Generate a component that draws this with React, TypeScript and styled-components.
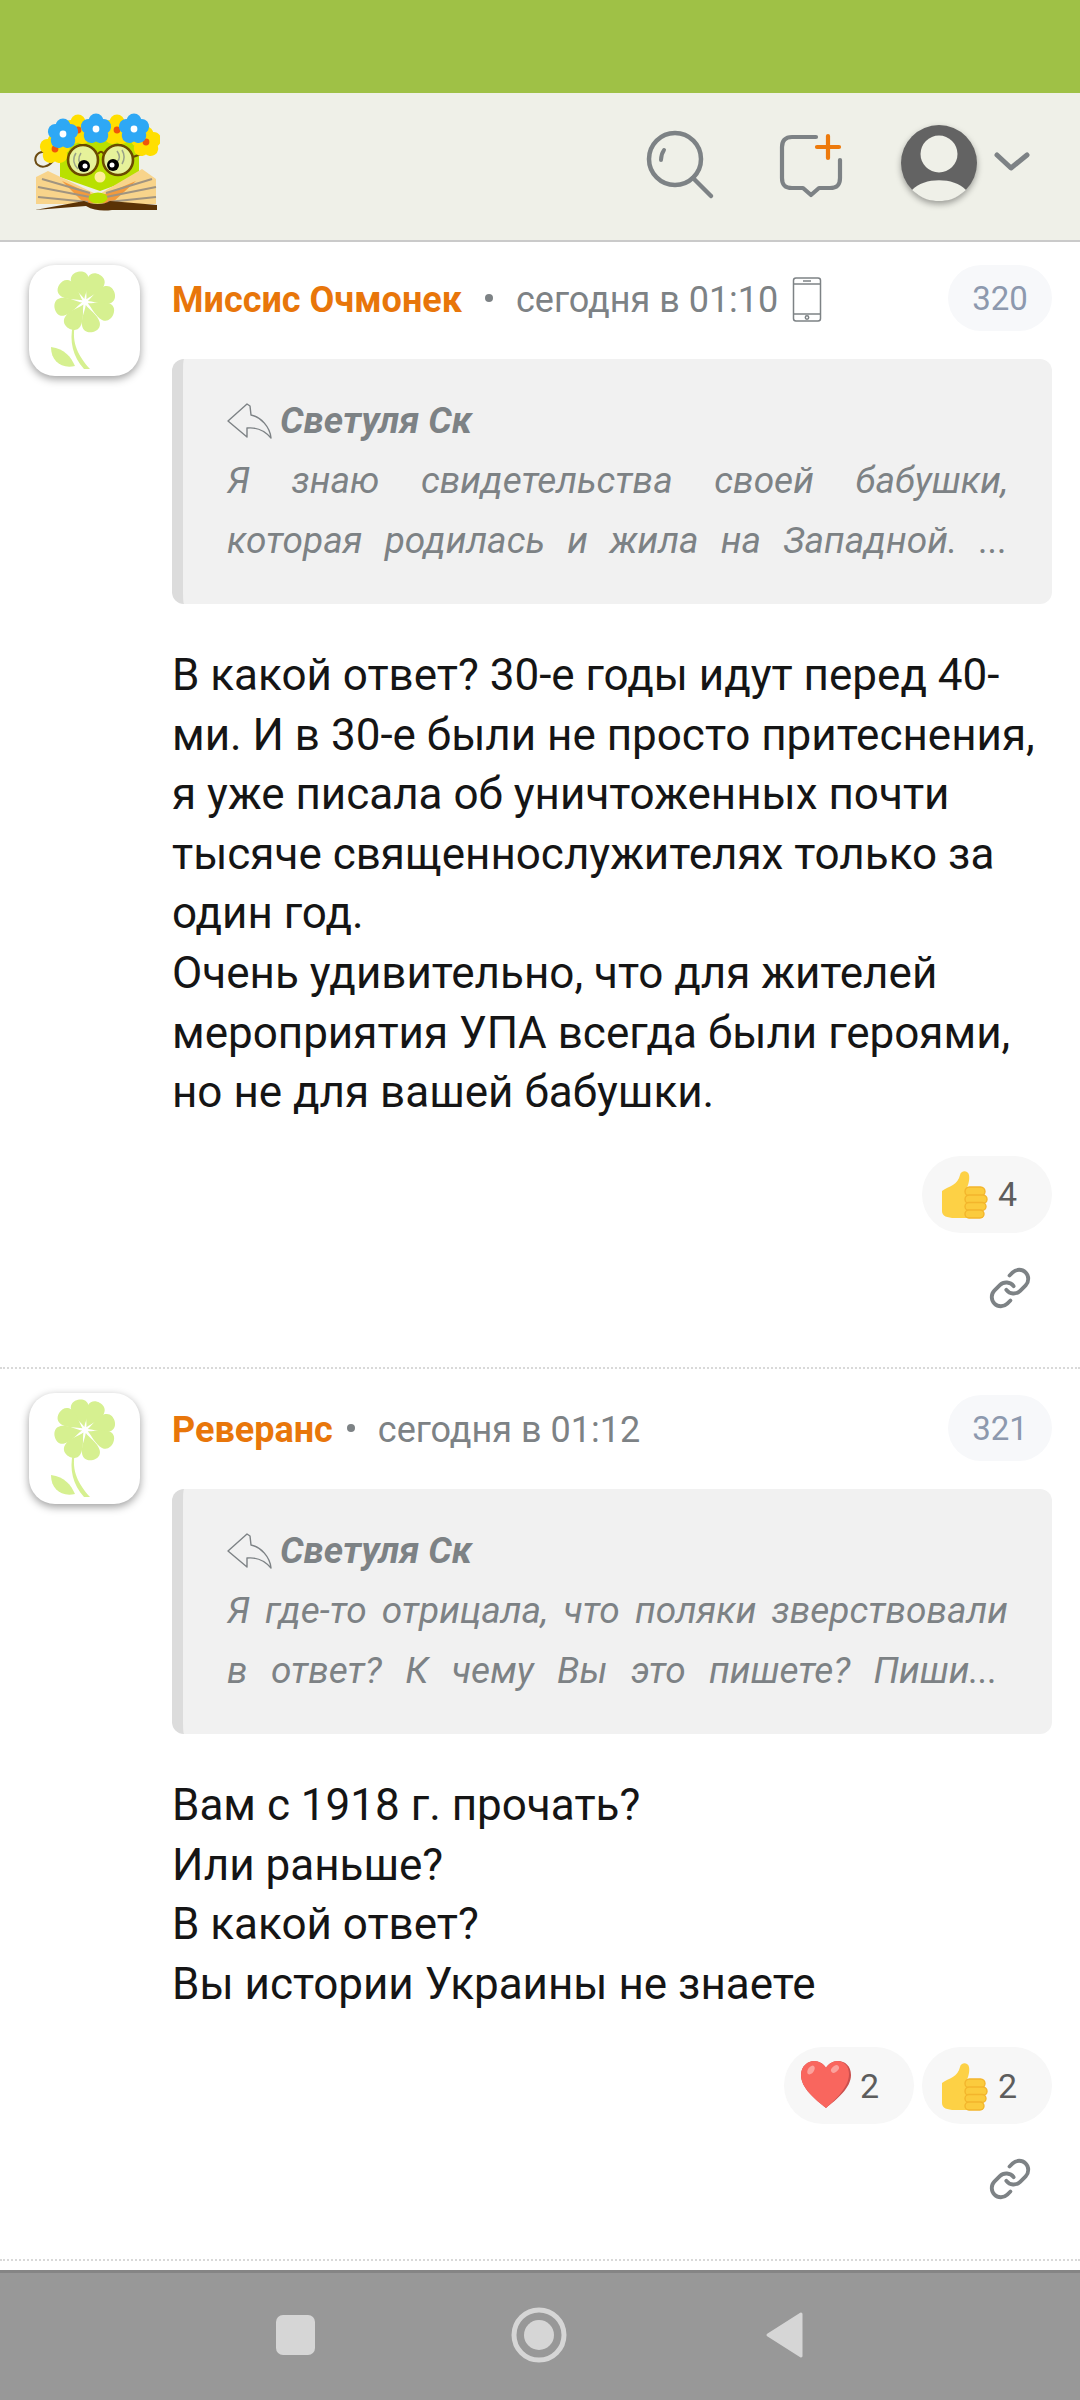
import React from 'react';
import styled, { createGlobalStyle } from 'styled-components';
import { Link as LinkIcon } from 'lucide-react';

const GlobalStyle = createGlobalStyle`
	html, body {
		margin: 0;
		padding: 0;
		background: #fff;
		font-family: Roboto, "Liberation Sans", sans-serif;
	}
	* {
		box-sizing: border-box;
	}
`;

const Screen = styled.div`
	width: 1080px;
	height: 2400px;
	display: flex;
	flex-direction: column;
	overflow: hidden;
	background: #fff;
`;

const StatusBar = styled.div`
	height: 93px;
	flex: none;
	background: #9fc146;
`;

const Header = styled.header`
	height: 149px;
	flex: none;
	display: flex;
	align-items: center;
	padding: 0 50px 0 34px;
	background: #eff0e8;
	border-bottom: 2px solid #cacaca;
`;

const Logo = styled.svg`
	width: 126px;
	height: 110px;
	margin-right: auto;
	flex: none;
`;

const SearchIcon = styled.svg`
	flex: none;
	margin-right: 53px;
`;

const ChatIcon = styled.svg`
	flex: none;
	margin-right: 50px;
`;

const UserIcon = styled.svg`
	flex: none;
	margin: 0 12px 8px 0;
	filter: drop-shadow(0 3px 3px rgba(0, 0, 0, 0.35));
`;

const ChevronIcon = styled.svg`
	flex: none;
	margin-bottom: 8px;
`;

const Feed = styled.main`
	flex: 1;
	min-height: 0;
	overflow: hidden;
`;

const Post = styled.article<{ $height: number; $top: number }>`
	display: grid;
	grid-template-columns: 111px 1fr;
	column-gap: 32px;
	height: ${(props) => props.$height}px;
	padding: ${(props) => props.$top}px 28px 0 29px;
	border-bottom: 2px dotted #d9d9d9;
`;

const Avatar = styled.div`
	width: 111px;
	height: 111px;
	border-radius: 26px;
	background: #fff;
	box-shadow: 0 3px 8px rgba(0, 0, 0, 0.38);
	overflow: hidden;
`;

const PostBody = styled.div<{ $offset: number }>`
	min-width: 0;
	display: flex;
	flex-direction: column;
	padding-top: ${(props) => props.$offset}px;
`;

const Meta = styled.div`
	height: 66px;
	display: flex;
	align-items: center;
	margin-bottom: 28px;
	white-space: nowrap;
`;

const Author = styled.span`
	font-size: 36px;
	font-weight: 700;
	color: #e8760a;
	padding-top: 4px;
`;

const Dot = styled.span<{ $gap: number }>`
	width: 8px;
	height: 8px;
	margin: 0 23px 0 ${(props) => props.$gap}px;
	border-radius: 50%;
	background: #7d8285;
`;

const Time = styled.span`
	font-size: 36px;
	color: #7d8285;
	padding-top: 4px;
`;

const PhoneIcon = styled.svg`
	width: 30px;
	height: 46px;
	margin: 4px 0 0 14px;
`;

const Number = styled.span`
	width: 104px;
	height: 66px;
	margin-left: auto;
	display: flex;
	align-items: center;
	justify-content: center;
	border-radius: 33px;
	background: #f7f8fa;
	color: #8d99ae;
	font-size: 33px;
`;

const Quote = styled.blockquote`
	height: 245px;
	margin: 0 0 42px;
	padding: 32px 44px;
	border-left: 11px solid #dcdcdc;
	border-radius: 12px;
	background: #f1f1f1;
	color: #7d8285;
	font-size: 37px;
	font-style: italic;
	line-height: 60px;
`;

const QuoteAuthor = styled.div`
	display: flex;
	align-items: center;
	gap: 8px;
	font-weight: 700;
`;

const ReplyIcon = styled.svg`
	width: 45px;
	height: 36px;
	flex: none;
`;

const QuoteLine = styled.div<{ $inset: number }>`
	padding-right: ${(props) => props.$inset}px;
	text-align: justify;
	text-align-last: justify;
`;

const Text = styled.div`
	font-size: 44px;
	line-height: 59.6px;
	color: #151515;
`;

const Reactions = styled.div`
	display: flex;
	justify-content: flex-end;
	gap: 8px;
	margin-top: 33px;
`;

const Reaction = styled.div`
	width: 130px;
	height: 77px;
	display: flex;
	align-items: center;
	gap: 9px;
	padding-left: 17px;
	border-radius: 39px;
	background: #f7f7f7;
	color: #5d5d5d;
	font-size: 34px;
`;

const EmojiIcon = styled.svg`
	width: 50px;
	height: 50px;
	flex: none;
`;

const LinkRow = styled.div`
	display: flex;
	justify-content: flex-end;
	margin-top: 33px;
	padding-right: 20px;
	color: #7d8285;
`;

const NavBar = styled.nav`
	height: 130px;
	flex: none;
	display: flex;
	align-items: center;
	padding: 0 0 4px 276px;
	background: #989898;
	border-top: 3px solid #858585;
`;

const NavSquare = styled.svg`
	flex: none;
	margin-right: 196px;
`;

const NavCircle = styled.svg`
	flex: none;
	margin-right: 198px;
`;

const NavBack = styled.svg`
	flex: none;
`;

const FlowerIcon = () => (
	<svg width="111" height="111" viewBox="0 0 111 111">
		{[-13, 28, 72, 115, 165, 212, 258, 305].map((angle) => (
			<path
				key={angle}
				d="M0 -3 C -2 -8 -9 -16 -9 -23 C -9 -29 -4 -31 0 -31 C 4 -31 9 -29 9 -23 C 9 -16 2 -8 0 -3"
				fill="#d6f090"
				transform={`translate(56 37) rotate(${angle})`}
			/>
		))}
		<path d="M46 60 C 42 78 50 92 61 104 L 55 104 C 44 92 40 76 44 60 Z" fill="#d6f090" />
		<path d="M22 82 C 36 84 42 92 46 101 C 32 104 22 96 22 82 Z" fill="#d6f090" />
	</svg>
);

const Flower = ({ x, y, color, center }: { x: number; y: number; color: string; center: string }) => (
	<g transform={`translate(${x} ${y})`}>
		{[0, 72, 144, 216, 288].map((a) => (
			<circle key={a} cx="0" cy="-8" r="7.5" fill={color} transform={`rotate(${a})`} />
		))}
		<circle r="3.4" fill={center} />
	</g>
);

const LogoArt = () => (
	<Logo viewBox="34 111 126 110">
		<path d="M50 153 C 36 146 32 160 38 164 C 42 167 48 166 53 160" fill="none" stroke="#6b4a10" strokeWidth="2" />
		<path d="M60 140 H139 V176 L100 190 L60 176 Z" fill="#b9e000" />
		<path d="M36 176 L48 170 L98 194 L142 168 L156 178 V203 H36 Z" fill="#f8d48b" />
		<path d="M62 180 L98 196 L136 180 L112 202 H84 Z" fill="#f39a3d" />
		<path d="M38 186 L90 196 M38 196 L88 201 M156 186 L106 196 M156 196 L108 201 M42 178 L90 192 M152 178 L106 192" stroke="#a09480" strokeWidth="2" />
		<ellipse cx="98" cy="197" rx="9.5" ry="5.5" fill="#b9e000" />
		<path d="M35 209 L84 200 C 92 204 104 204 110 200 L157 204 V209 H112 C 104 210 94 210 86 205 Z" fill="#5a3206" />
		<circle cx="83" cy="159" r="15" fill="#e6f29a" stroke="#6b4a00" strokeWidth="2.6" />
		<circle cx="118" cy="159" r="15" fill="#e6f29a" stroke="#6b4a00" strokeWidth="2.6" />
		<path d="M98 153 C 100 150 102 150 104 153 M133 156 L144 152" fill="none" stroke="#6b4a00" strokeWidth="2.2" />
		<path d="M76 152 C 72 158 74 164 78 168 M81 152 C 77 158 79 162 82 165 M122 149 C 125 154 125 158 122 163 M117 150 C 120 154 120 158 117 161" fill="none" stroke="#9aa38a" strokeWidth="1.5" />
		<circle cx="84" cy="165" r="6" fill="#000" />
		<circle cx="85" cy="165" r="2.5" fill="#fff" />
		<circle cx="113" cy="164" r="6" fill="#000" />
		<circle cx="112" cy="164" r="2.5" fill="#fff" />
		<circle cx="100" cy="176" r="5.5" fill="#ffee99" />
		<Flower x={55} y={148} color="#ffdf00" center="#f0560a" />
		<Flower x={146} y={141} color="#ffdf00" center="#f0560a" />
		<Flower x={78} y={129} color="#ffdf00" center="#f0560a" />
		<Flower x={117} y={129} color="#ffdf00" center="#f0560a" />
		<Flower x={63} y={133} color="#2ea8f5" center="#fff" />
		<Flower x={96} y={128} color="#2ea8f5" center="#fff" />
		<Flower x={134} y={128} color="#2ea8f5" center="#fff" />
	</Logo>
);

const ThumbIcon = () => (
	<EmojiIcon viewBox="0 0 50 50">
		<path d="M3 22 C 10 17 19 16 21 6 C 22 1 29 1 30 6 C 31 11 29 16 28 19 L 44 19 L 44 49 L 16 49 C 8 49 3 47 3 42 Z" fill="#fdd145" />
		<g fill="#fbcb3d" stroke="#f3b52c" strokeWidth="1.4">
			<rect x="26" y="18" width="20" height="9" rx="4.5" />
			<rect x="26" y="26" width="22" height="8.5" rx="4.2" />
			<rect x="26" y="33.5" width="21" height="8" rx="4" />
			<rect x="26" y="41" width="19" height="8" rx="4" />
		</g>
	</EmojiIcon>
);

const HeartIcon = () => (
	<EmojiIcon viewBox="0 0 50 50">
		<path d="M25 47 C 14 38 0 27 0 14 C 0 5 7 0 13 0 C 18 0 23 3 25 7 C 27 3 32 0 37 0 C 44 0 50 5 50 14 C 50 27 36 38 25 47 Z" fill="#c9504e" />
		<path d="M25 47 C 14 38 0 27 0 14 C 0 5 7 0 13 0 C 18 0 23 3 25 7 C 27 3 32 0 36 0 C 43 0 48 5 48 13 C 48 26 35 38 25 47 Z" fill="#f9665e" />
		<ellipse cx="10" cy="9" rx="3" ry="5" fill="#fba29c" transform="rotate(35 10 9)" />
		<ellipse cx="34" cy="8" rx="3" ry="4.5" fill="#fba29c" transform="rotate(50 34 8)" />
	</EmojiIcon>
);

const posts = [
	{
		author: 'Миссис Очмонек',
		time: 'сегодня в 01:10',
		phone: true,
		number: 320,
		height: 1127,
		top: 23,
		offset: 0,
		dotGap: 23,
		quote: [
			{ line: 'Я знаю свидетельства своей бабушки,', inset: 0 },
			{ line: 'которая родилась и жила на Западной. ...', inset: 0 },
		],
		text: [
			'В какой ответ? 30-е годы идут перед 40-',
			'ми. И в 30-е были не просто притеснения,',
			'я уже писала об уничтоженных почти',
			'тысяче священнослужителях только за',
			'один год.',
			'Очень удивительно, что для жителей',
			'мероприятия УПА всегда были героями,',
			'но не для вашей бабушки.',
		],
		reactions: [{ kind: 'thumb', count: 4 }],
	},
	{
		author: 'Реверанс',
		time: 'сегодня в 01:12',
		phone: false,
		number: 321,
		height: 892,
		top: 24,
		offset: 2,
		dotGap: 14,
		quote: [
			{ line: 'Я где-то отрицала, что поляки зверствовали', inset: 0 },
			{ line: 'в ответ? К чему Вы это пишете? Пиши...', inset: 10 },
		],
		text: ['Вам с 1918 г. прочать?', 'Или раньше?', 'В какой ответ?', 'Вы истории Украины не знаете'],
		reactions: [
			{ kind: 'heart', count: 2 },
			{ kind: 'thumb', count: 2 },
		],
	},
];

const App = () => (
	<Screen>
		<GlobalStyle />
		<StatusBar />
		<Header>
			<LogoArt />
			<SearchIcon width="80" height="80" viewBox="0 0 80 80" fill="none" stroke="#7d8285" strokeLinecap="round">
				<circle cx="32" cy="32" r="26" strokeWidth="4.5" />
				<path d="M50 51 L68 69" strokeWidth="4.5" />
				<path d="M18 33 C 18 29 19 26 21 23" strokeWidth="4" />
			</SearchIcon>
			<ChatIcon width="70" height="70" viewBox="0 0 70 70" fill="none" strokeLinecap="round" strokeLinejoin="round">
				<path d="M40 5 H16 C 9 5 6 9 6 15 V46 C 6 53 9 56 16 56 H27 L35 63 L43 56 H54 C 61 56 64 53 64 46 V28" stroke="#7d8285" strokeWidth="4.2" />
				<path d="M52 4 V26 M41 15 H63" stroke="#ed7a0c" strokeWidth="4.2" />
			</ChatIcon>
			<UserIcon width="86" height="86" viewBox="0 0 86 86">
				<circle cx="43" cy="43" r="38" fill="#636363" />
				<circle cx="43" cy="34" r="18.5" fill="#eff0e8" />
				<path d="M16 70 C 28 57 58 57 70 70 C 60 79 52 81 43 81 C 34 81 26 79 16 70 Z" fill="#eff0e8" />
			</UserIcon>
			<ChevronIcon width="36" height="24" viewBox="0 0 36 24" fill="none" stroke="#7d8285" strokeWidth="5" strokeLinecap="round" strokeLinejoin="round">
				<path d="M3 4 L17 17 L33 4" />
			</ChevronIcon>
		</Header>
		<Feed>
			{posts.map((post) => (
				<Post key={post.number} $height={post.height} $top={post.top}>
					<Avatar>
						<FlowerIcon />
					</Avatar>
					<PostBody $offset={post.offset}>
						<Meta>
							<Author>{post.author}</Author>
							<Dot $gap={post.dotGap} />
							<Time>{post.time}</Time>
							{post.phone && (
								<PhoneIcon viewBox="0 0 30 46" fill="none" stroke="#7d8285" strokeWidth="1.5">
									<rect x="1.5" y="1" width="27" height="43" rx="2.5" />
									<path d="M1.5 7 H28.5 M1.5 37 H28.5 M11 4 H19" />
									<circle cx="15" cy="40.5" r="1.7" />
								</PhoneIcon>
							)}
							<Number>{post.number}</Number>
						</Meta>
						<Quote>
							<QuoteAuthor>
								<ReplyIcon viewBox="0 0 45 36" fill="none" stroke="#7d8285" strokeWidth="1.4" strokeLinejoin="round">
									<path d="M20 1 L1 18 L20 34 L20 25 C 30 24 38 28 44 35 C 43 24 34 14 24 12 L23 3 Z" />
								</ReplyIcon>
								Светуля Ск
							</QuoteAuthor>
							{post.quote.map((item) => (
								<QuoteLine key={item.line} $inset={item.inset}>
									{item.line}
								</QuoteLine>
							))}
						</Quote>
						<Text>
							{post.text.map((line) => (
								<div key={line}>{line}</div>
							))}
						</Text>
						<Reactions>
							{post.reactions.map((reaction) => (
								<Reaction key={reaction.kind}>
									{reaction.kind === 'thumb' ? <ThumbIcon /> : <HeartIcon />}
									{reaction.count}
								</Reaction>
							))}
						</Reactions>
						<LinkRow>
							<LinkIcon size={44} strokeWidth={2.1} />
						</LinkRow>
					</PostBody>
				</Post>
			))}
		</Feed>
		<NavBar>
			<NavSquare width="39" height="40" viewBox="0 0 39 40">
				<rect width="39" height="40" rx="7" fill="#d6d6d6" />
			</NavSquare>
			<NavCircle width="56" height="56" viewBox="0 0 56 56">
				<circle cx="28" cy="28" r="25" fill="none" stroke="#d6d6d6" strokeWidth="5" />
				<circle cx="28" cy="28" r="15" fill="#d6d6d6" />
			</NavCircle>
			<NavBack width="40" height="48" viewBox="0 0 40 48">
				<path d="M36 3 L3 24 L36 45 Z" fill="#d6d6d6" stroke="#d6d6d6" strokeWidth="3" strokeLinejoin="round" />
			</NavBack>
		</NavBar>
	</Screen>
);

export default App;
